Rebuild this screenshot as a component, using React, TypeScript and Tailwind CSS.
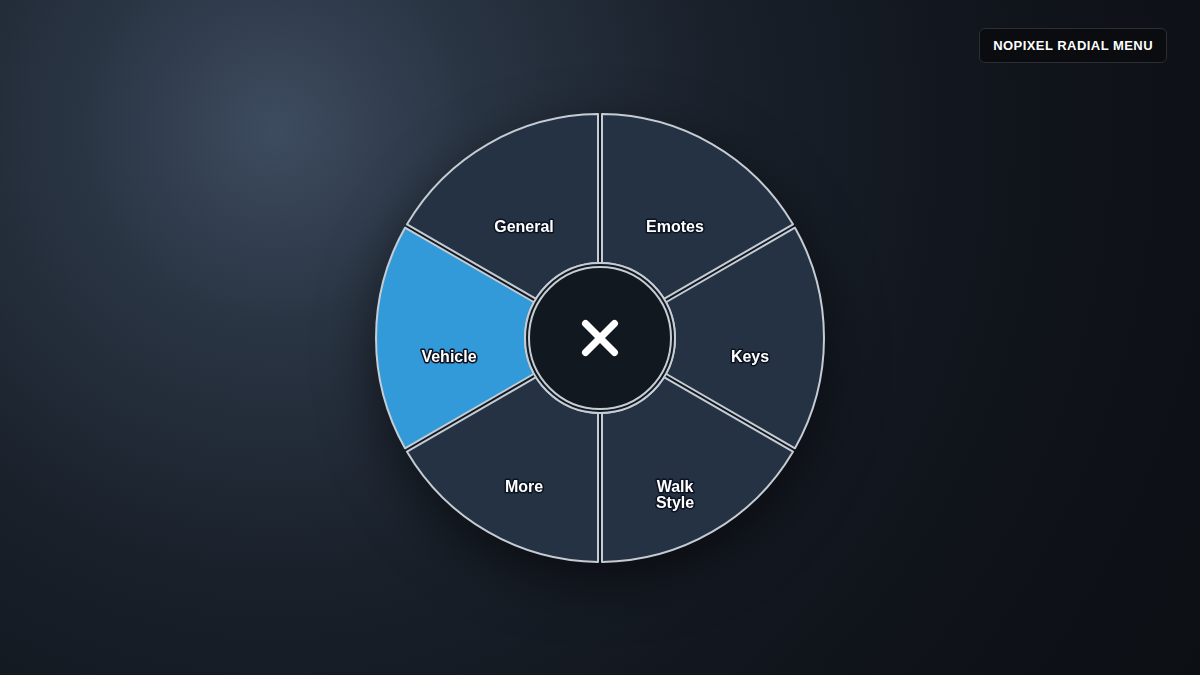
import React from "react";

const R = 224;
const r = 75;
const GAP = 2;
const C = 230;

const segments = [
	{ id: "keys", from: -30, to: 30 },
	{ id: "walk", from: 30, to: 90 },
	{ id: "more", from: 90, to: 150 },
	{ id: "vehicle", from: 150, to: 210, active: true },
	{ id: "general", from: 210, to: 270 },
	{ id: "emotes", from: 270, to: 330 },
];

const labels = [
	{ lines: ["General"], x: 154, y: 124 },
	{ lines: ["Emotes"], x: 305, y: 124 },
	{ lines: ["Vehicle"], x: 79, y: 254 },
	{ lines: ["Keys"], x: 380, y: 254 },
	{ lines: ["More"], x: 154, y: 384 },
	{ lines: ["Walk", "Style"], x: 305, y: 384 },
];

function pt(rad: number, a: number) {
	return `${(C + rad * Math.cos(a)).toFixed(2)} ${(C + rad * Math.sin(a)).toFixed(2)}`;
}

function sector(from: number, to: number) {
	const a0 = (from * Math.PI) / 180;
	const a1 = (to * Math.PI) / 180;
	const o0 = a0 + GAP / R;
	const o1 = a1 - GAP / R;
	const i0 = a0 + GAP / r;
	const i1 = a1 - GAP / r;
	return `M ${pt(R, o0)} A ${R} ${R} 0 0 1 ${pt(R, o1)} L ${pt(r, i1)} A ${r} ${r} 0 0 0 ${pt(r, i0)} Z`;
}

function Wheel() {
	return (
		<svg
			width="460"
			height="460"
			viewBox="0 0 460 460"
			className="block drop-shadow-[0_18px_28px_rgba(0,0,0,0.55)]"
		>
			<circle cx={C} cy={C} r={223} fill="#121821" />
			{segments.map(s => (
				<path
					key={s.id}
					d={sector(s.from, s.to)}
					fill={s.active ? "#339ad9" : "#243243"}
					stroke="#c5ccd3"
					strokeWidth={2}
					strokeLinejoin="round"
				/>
			))}
			<circle cx={C} cy={C} r={75} fill="#121821" stroke="#c5ccd3" strokeWidth={2} />
			<circle cx={C} cy={C} r={71} fill="#111820" stroke="#c5ccd3" strokeWidth={2} />
			<g stroke="#ffffff" strokeWidth={7} strokeLinecap="round">
				<line x1={C - 14.5} y1={C - 14.5} x2={C + 14.5} y2={C + 14.5} />
				<line x1={C + 14.5} y1={C - 14.5} x2={C - 14.5} y2={C + 14.5} />
			</g>
			{labels.map(l => (
				<text
					key={l.lines.join("")}
					x={l.x}
					y={l.y}
					textAnchor="middle"
					fill="#ffffff"
					stroke="#0b1220"
					strokeWidth={3}
					strokeLinejoin="round"
					paintOrder="stroke"
					className="font-['Liberation_Sans',Arial,sans-serif] text-[16px] font-bold"
				>
					{l.lines.map((line, i) => (
						<tspan key={line} x={l.x} dy={i === 0 ? 0 : 16}>
							{line}
						</tspan>
					))}
				</text>
			))}
		</svg>
	);
}

export default function App() {
	return (
		<main className="relative w-full h-screen overflow-hidden flex items-center justify-center bg-[radial-gradient(circle_at_23%_19%,#3e4c60_0%,#2a3544_18%,#19202a_42%,#10141b_70%,#0c0f14_100%)] font-['Liberation_Sans',Arial,sans-serif]">
			<div className="absolute top-[28px] right-[33px] h-[35px] px-[13px] flex items-center rounded-md border border-[#2b2f35] bg-[#0a0c0f]">
				<span className="text-[13px] font-bold tracking-[0.035em] text-white">
					NOPIXEL RADIAL MENU
				</span>
			</div>
			<Wheel />
		</main>
	);
}
